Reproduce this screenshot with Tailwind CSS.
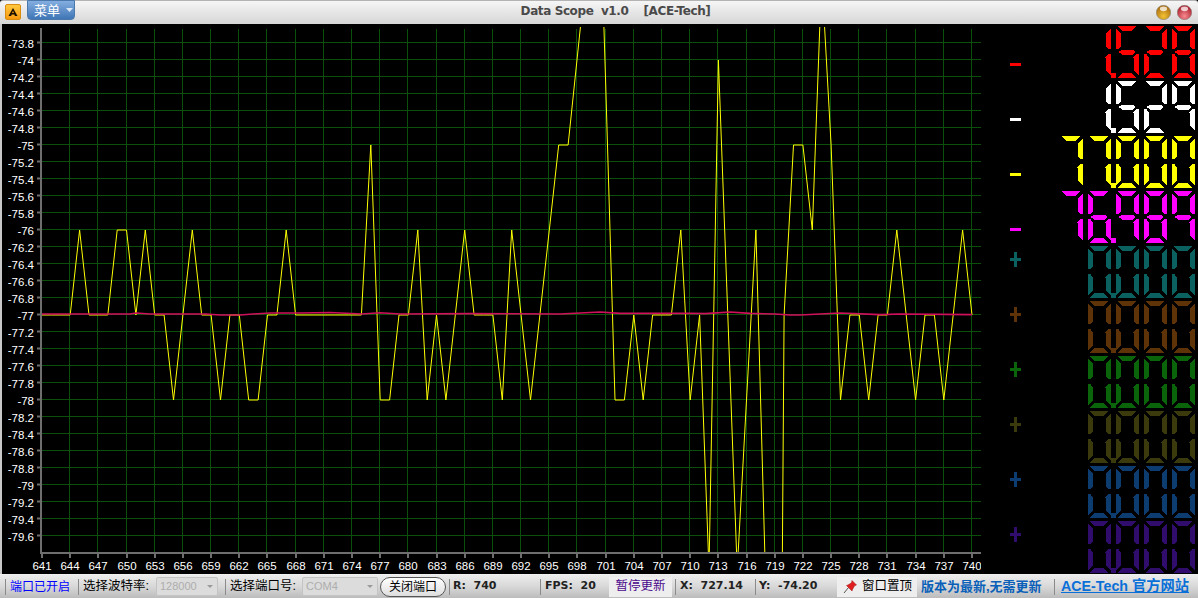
<!DOCTYPE html>
<html lang="zh">
<head>
<meta charset="utf-8">
<title>Data Scope</title>
<script src="https://cdn.jsdelivr.net/npm/@tailwindcss/browser@4"></script>
</head>
<body class="bg-black">
<div class="w-[1198px] h-[598px] overflow-hidden flex flex-col [font-family:'Liberation_Sans','Noto_Sans_CJK_SC',sans-serif]">

  <header class="h-[24px] shrink-0 flex items-start border-t border-[#b4b4b4] bg-gradient-to-b from-[#f6f6f6] to-[#d6d6d6] rounded-t-[3px]">
    <div class="ml-[5px] mt-[3px] w-[16px] h-[16px] rounded-[2px] border border-[#d98c10] bg-gradient-to-b from-[#ffc83c] to-[#f59a0c] flex items-center justify-center">
      <svg width="10" height="9" viewBox="0 0 10 9"><path d="M5 0 L9.5 8 L7 8 L6.2 6.4 L3.8 6.4 L3 8 L0.5 8 Z" fill="#1c1200"/><rect x="4.2" y="3.6" width="1.6" height="1.4" fill="#e89a10"/></svg>
    </div>
    <div class="ml-[6px] -mt-[1px] w-[48px] h-[20px] rounded-b-[4px] border border-[#4a78ad] bg-gradient-to-b from-[#84aee0] to-[#3f76b6] flex items-center pl-[6px] gap-[6px] text-white text-[13px] leading-none">
      <span>菜单</span>
      <svg width="7" height="4" viewBox="0 0 7 4"><path d="M0 0H7L3.5 4Z" fill="#dce8f6"/></svg>
    </div>
    <div class="flex-1 text-center text-[12px] leading-[21px] font-bold text-[#4a4a4a] whitespace-pre [font-family:'DejaVu_Sans',sans-serif] tracking-[-0.4px]">Data Scope  v1.0    [ACE-Tech]</div>
    <div class="flex gap-[6px] mt-[4px] mr-[6px]">
      <svg width="15" height="15" viewBox="0 0 15 15"><defs><radialGradient id="o1" cx="50%" cy="75%" r="70%"><stop offset="0" stop-color="#f4c232"/><stop offset="1" stop-color="#a86a10"/></radialGradient><radialGradient id="o2" cx="50%" cy="75%" r="70%"><stop offset="0" stop-color="#f88a90"/><stop offset="1" stop-color="#a81c28"/></radialGradient></defs><circle cx="7.5" cy="7.5" r="7.2" fill="url(#o1)" stroke="#8a8a7a" stroke-width=".6"/><ellipse cx="7.5" cy="3.8" rx="3.6" ry="2.4" fill="#fff" opacity=".75"/></svg>
      <svg width="15" height="15" viewBox="0 0 15 15"><circle cx="7.5" cy="7.5" r="7.2" fill="url(#o2)" stroke="#8a7a7a" stroke-width=".6"/><ellipse cx="7.5" cy="3.8" rx="3.6" ry="2.4" fill="#fff" opacity=".75"/></svg>
    </div>
  </header>

  <main class="h-[550px] shrink-0 flex bg-black">
    <div class="w-[2px] shrink-0 bg-[#c8c8c8]"></div>
    <svg class="w-[979px] h-[550px] shrink-0" viewBox="2 24 979 550">
      <defs><clipPath id="plot"><rect x="42" y="27" width="939" height="526"/></clipPath></defs>
      <path fill="none" stroke="#0a4f0a" stroke-width="1" d="M69.5 29V553M97.5 29V553M126.5 29V553M154.5 29V553M182.5 29V553M210.5 29V553M238.5 29V553M266.5 29V553M295.5 29V553M323.5 29V553M351.5 29V553M379.5 29V553M407.5 29V553M436.5 29V553M464.5 29V553M492.5 29V553M520.5 29V553M548.5 29V553M576.5 29V553M605.5 29V553M633.5 29V553M661.5 29V553M689.5 29V553M717.5 29V553M746.5 29V553M774.5 29V553M802.5 29V553M830.5 29V553M858.5 29V553M886.5 29V553M915.5 29V553M943.5 29V553M971.5 29V553"/>
      <path fill="none" stroke="#0a4f0a" stroke-width="1" d="M42 42.5H981M42 59.5H981M42 76.5H981M42 93.5H981M42 110.5H981M42 127.5H981M42 144.5H981M42 161.5H981M42 178.5H981M42 195.5H981M42 212.5H981M42 229.5H981M42 246.5H981M42 263.5H981M42 280.5H981M42 297.5H981M42 314.5H981M42 331.5H981M42 348.5H981M42 365.5H981M42 382.5H981M42 399.5H981M42 416.5H981M42 433.5H981M42 450.5H981M42 467.5H981M42 484.5H981M42 501.5H981M42 518.5H981M42 535.5H981"/>
      <g clip-path="url(#plot)" fill="none">
        <polyline stroke="#ffff00" stroke-width="1" points="42,315 51.4,315 60.8,315 70.2,315 79.6,230 89,315 98.4,315 107.8,315 117.2,230 126.5,230 135.9,315 145.3,230 154.7,315 164.1,315 173.5,400 182.9,315 192.3,230 201.7,315 211.1,315 220.5,400 229.9,315 239.3,315 248.7,400 258.1,400 267.5,315 276.9,315 286.2,230 295.6,315 361.4,315 370.8,145 380.2,400 389.6,400 399,315 408.4,315 417.8,230 427.2,400 436.5,315 445.9,400 455.3,315 464.7,230 474.1,315 483.5,315 492.9,315 502.3,400 511.7,230 521.1,315 530.5,400 539.9,315 549.3,230 558.7,145 568.1,145 577.5,55 586.9,-35 596.2,-220 605.6,81 615,400 624.4,400 633.8,315 643.2,400 652.6,315 662,315 671.4,315 680.8,230 690.2,400 699.6,315 709,570 718.4,60 727.8,315 737.2,570 746.5,400 755.9,230 765.3,570 774.7,1618 784.1,315 793.5,145 802.9,145 812.3,230 821.7,-25 831.1,145 840.5,400 849.9,315 859.3,315 868.7,400 878.1,315 887.4,315 896.8,230 906.2,315 915.6,400 925,315 934.4,315 943.8,400 953.2,315 962.6,230 972,315"/>
        <polyline stroke="#d0105c" stroke-width="1.6" points="42,314 130,314 136,313 150,314 206,314 220,315 240,315 253,314 270,313 300,313 330,312.5 362,314 380,312.8 400,314 470,313.6 560,314 600,312 620,313.4 690,313.2 705,313.6 730,312 750,313.4 775,314 790,315 800,315 820,314 840,313 880,314.6 900,314 972,314.6"/>
      </g>
      <path fill="none" stroke="#6e6e6e" stroke-width="2" d="M41 28V554M40 553H981"/>
      <path fill="none" stroke="#6e6e6e" stroke-width="2" d="M37 42.5H41M37 59.5H41M37 76.5H41M37 93.5H41M37 110.5H41M37 127.5H41M37 144.5H41M37 161.5H41M37 178.5H41M37 195.5H41M37 212.5H41M37 229.5H41M37 246.5H41M37 263.5H41M37 280.5H41M37 297.5H41M37 314.5H41M37 331.5H41M37 348.5H41M37 365.5H41M37 382.5H41M37 399.5H41M37 416.5H41M37 433.5H41M37 450.5H41M37 467.5H41M37 484.5H41M37 501.5H41M37 518.5H41M37 535.5H41"/>
      <path fill="none" stroke="#6e6e6e" stroke-width="2" d="M42 554V558M70 554V558M98 554V558M127 554V558M155 554V558M183 554V558M211 554V558M239 554V558M267 554V558M296 554V558M324 554V558M352 554V558M380 554V558M408 554V558M437 554V558M465 554V558M493 554V558M521 554V558M549 554V558M577 554V558M606 554V558M634 554V558M662 554V558M690 554V558M718 554V558M747 554V558M775 554V558M803 554V558M831 554V558M859 554V558M887 554V558M916 554V558M944 554V558M972 554V558"/>
      <g class="fill-white text-[11.5px]" text-anchor="end">
        <text x="34" y="48">-73.8</text><text x="34" y="65">-74</text><text x="34" y="82">-74.2</text><text x="34" y="99">-74.4</text><text x="34" y="116">-74.6</text><text x="34" y="133">-74.8</text><text x="34" y="150">-75</text><text x="34" y="167">-75.2</text><text x="34" y="184">-75.4</text><text x="34" y="201">-75.6</text><text x="34" y="218">-75.8</text><text x="34" y="235">-76</text><text x="34" y="252">-76.2</text><text x="34" y="269">-76.4</text><text x="34" y="286">-76.6</text><text x="34" y="303">-76.8</text><text x="34" y="320">-77</text><text x="34" y="337">-77.2</text><text x="34" y="354">-77.4</text><text x="34" y="371">-77.6</text><text x="34" y="388">-77.8</text><text x="34" y="405">-78</text><text x="34" y="422">-78.2</text><text x="34" y="439">-78.4</text><text x="34" y="456">-78.6</text><text x="34" y="473">-78.8</text><text x="34" y="490">-79</text><text x="34" y="507">-79.2</text><text x="34" y="524">-79.4</text><text x="34" y="541">-79.6</text>
      </g>
      <g class="fill-white text-[11.5px]" text-anchor="middle">
        <text x="42" y="570">641</text><text x="70" y="570">644</text><text x="98" y="570">647</text><text x="127" y="570">650</text><text x="155" y="570">653</text><text x="183" y="570">656</text><text x="211" y="570">659</text><text x="239" y="570">662</text><text x="267" y="570">665</text><text x="296" y="570">668</text><text x="324" y="570">671</text><text x="352" y="570">674</text><text x="380" y="570">677</text><text x="408" y="570">680</text><text x="437" y="570">683</text><text x="465" y="570">686</text><text x="493" y="570">689</text><text x="521" y="570">692</text><text x="549" y="570">695</text><text x="577" y="570">698</text><text x="606" y="570">701</text><text x="634" y="570">704</text><text x="662" y="570">707</text><text x="690" y="570">710</text><text x="718" y="570">713</text><text x="747" y="570">716</text><text x="775" y="570">719</text><text x="803" y="570">722</text><text x="831" y="570">725</text><text x="859" y="570">728</text><text x="887" y="570">731</text><text x="916" y="570">734</text><text x="944" y="570">737</text><text x="972" y="570">740</text>
      </g>
    </svg>

    <aside class="w-[217px] shrink-0 pt-[2px] overflow-hidden">
      <svg class="absolute w-0 h-0">
        <defs>
          <polygon id="sA" points="2,0 20.5,0 16,5 6.5,5"/>
          <polygon id="sF" points="0,2.5 5,7.5 5,20.5 2.5,23 0,23"/>
          <polygon id="sB" points="22.5,2.5 17.5,7.5 17.5,20.5 20,23 22.5,23"/>
          <polygon id="sG" points="2.5,26 7,23.5 16,23.5 20,26 16,29 7,29"/>
          <polygon id="sE" points="0,28 2.5,28.5 5,31.5 5,44 0,49"/>
          <polygon id="sC" points="22.5,28 20,28.5 17.5,31.5 17.5,44 22.5,49"/>
          <polygon id="sD" points="6.5,47 16,47 20.5,52 2,52"/>
          <g id="d0"><use href="#sA"/><use href="#sB"/><use href="#sC"/><use href="#sD"/><use href="#sE"/><use href="#sF"/></g>
          <g id="d1"><use href="#sB"/><use href="#sC"/></g>
          <g id="d2"><use href="#sA"/><use href="#sB"/><use href="#sG"/><use href="#sE"/><use href="#sD"/></g>
          <g id="d5"><use href="#sA"/><use href="#sF"/><use href="#sG"/><use href="#sC"/><use href="#sD"/></g>
          <g id="d6"><use href="#sA"/><use href="#sF"/><use href="#sG"/><use href="#sE"/><use href="#sC"/><use href="#sD"/></g>
          <g id="d7"><use href="#sA"/><use href="#sB"/><use href="#sC"/></g>
          <g id="d8"><use href="#sA"/><use href="#sB"/><use href="#sC"/><use href="#sD"/><use href="#sE"/><use href="#sF"/><use href="#sG"/></g>
          <g id="d9"><use href="#sA"/><use href="#sB"/><use href="#sC"/><use href="#sF"/><use href="#sG"/></g>
          <g id="z"><use href="#d0" x="28"/><rect x="51" y="47" width="5" height="5"/><use href="#d0" x="56"/><use href="#d0" x="84"/><use href="#d0" x="112"/></g>
        </defs>
      </svg>

      <div class="h-[55px] flex">
        <div class="ml-[29px] mt-[37px] w-[11px] h-[3px] bg-[#ff0000]"></div>
        <svg class="ml-[39px] w-[138px] h-[52px]" shape-rendering="crispEdges" fill="#ff0000"><use href="#d1" x="28"/><rect x="51" y="47" width="5" height="5"/><use href="#d5" x="56"/><use href="#d2" x="84"/><use href="#d8" x="112"/></svg>
      </div>
      <div class="h-[55px] flex">
        <div class="ml-[29px] mt-[37px] w-[11px] h-[3px] bg-white"></div>
        <svg class="ml-[39px] w-[138px] h-[52px]" shape-rendering="crispEdges" fill="#ffffff"><use href="#d1" x="28"/><rect x="51" y="47" width="5" height="5"/><use href="#d5" x="56"/><use href="#d2" x="84"/><use href="#d9" x="112"/></svg>
      </div>
      <div class="h-[55px] flex">
        <div class="ml-[29px] mt-[37px] w-[11px] h-[3px] bg-[#ffff00]"></div>
        <svg class="ml-[39px] w-[138px] h-[52px]" shape-rendering="crispEdges" fill="#ffff00"><use href="#d7" x="0"/><use href="#d7" x="28"/><rect x="51" y="47" width="5" height="5"/><use href="#d0" x="56"/><use href="#d0" x="84"/><use href="#d0" x="112"/></svg>
      </div>
      <div class="h-[55px] flex">
        <div class="ml-[29px] mt-[37px] w-[11px] h-[3px] bg-[#ff00ff]"></div>
        <svg class="ml-[39px] w-[138px] h-[52px]" shape-rendering="crispEdges" fill="#ff00ff"><use href="#d7" x="0"/><use href="#d6" x="28"/><rect x="51" y="47" width="5" height="5"/><use href="#d9" x="56"/><use href="#d8" x="84"/><use href="#d9" x="112"/></svg>
      </div>
      <div class="h-[55px] flex">
        <svg class="ml-[29px] mt-[6px] w-[11px] h-[15px]" fill="#0b6060"><rect y="6" width="11" height="3"/><rect x="4" width="3" height="15"/></svg>
        <svg class="ml-[39px] w-[138px] h-[52px]" shape-rendering="crispEdges" fill="#0b6060"><use href="#z"/></svg>
      </div>
      <div class="h-[55px] flex">
        <svg class="ml-[29px] mt-[6px] w-[11px] h-[15px]" fill="#5f3308"><rect y="6" width="11" height="3"/><rect x="4" width="3" height="15"/></svg>
        <svg class="ml-[39px] w-[138px] h-[52px]" shape-rendering="crispEdges" fill="#5f3308"><use href="#z"/></svg>
      </div>
      <div class="h-[55px] flex">
        <svg class="ml-[29px] mt-[6px] w-[11px] h-[15px]" fill="#0a640a"><rect y="6" width="11" height="3"/><rect x="4" width="3" height="15"/></svg>
        <svg class="ml-[39px] w-[138px] h-[52px]" shape-rendering="crispEdges" fill="#0a640a"><use href="#z"/></svg>
      </div>
      <div class="h-[55px] flex">
        <svg class="ml-[29px] mt-[6px] w-[11px] h-[15px]" fill="#3a3a0c"><rect y="6" width="11" height="3"/><rect x="4" width="3" height="15"/></svg>
        <svg class="ml-[39px] w-[138px] h-[52px]" shape-rendering="crispEdges" fill="#3a3a0c"><use href="#z"/></svg>
      </div>
      <div class="h-[55px] flex">
        <svg class="ml-[29px] mt-[6px] w-[11px] h-[15px]" fill="#0c3c70"><rect y="6" width="11" height="3"/><rect x="4" width="3" height="15"/></svg>
        <svg class="ml-[39px] w-[138px] h-[52px]" shape-rendering="crispEdges" fill="#0c3c70"><use href="#z"/></svg>
      </div>
      <div class="h-[52px] flex">
        <svg class="ml-[29px] mt-[6px] w-[11px] h-[15px]" fill="#300c6c"><rect y="6" width="11" height="3"/><rect x="4" width="3" height="15"/></svg>
        <svg class="ml-[39px] w-[138px] h-[52px]" shape-rendering="crispEdges" fill="#300c6c"><use href="#z"/></svg>
      </div>
    </aside>
  </main>

  <footer class="h-[24px] shrink-0 flex items-center border-t border-[#f0f0f0] bg-gradient-to-b from-[#ececec] via-[#d8d8d8] to-[#bcbcbc] text-[12px] text-black whitespace-nowrap">
    <div class="ml-[5px] w-px h-[16px] bg-[#8a8a8a]"></div>
    <span class="ml-[4px] w-[68px] text-[#0000ff]">端口已开启</span>
    <div class="w-px h-[16px] bg-[#8a8a8a]"></div>
    <span class="ml-[4px] w-[73px] text-[12.5px]">选择波特率:</span>
    <div class="w-[62px] h-[19px] rounded-[2px] border border-[#c4c4c4] bg-[#dcdcdc] text-[#adadad] text-[11px] flex items-center pl-[3px] justify-between pr-[4px]"><span>128000</span><svg width="6" height="3" viewBox="0 0 6 3"><path d="M0 0H6L3 3Z" fill="#9a9a9a"/></svg></div>
    <div class="ml-[7px] w-px h-[16px] bg-[#8a8a8a]"></div>
    <span class="ml-[4px] w-[72px] text-[12.5px]">选择端口号:</span>
    <div class="w-[76px] h-[19px] rounded-[2px] border border-[#c4c4c4] bg-[#dcdcdc] text-[#adadad] text-[11px] flex items-center pl-[3px] justify-between pr-[4px]"><span>COM4</span><svg width="6" height="3" viewBox="0 0 6 3"><path d="M0 0H6L3 3Z" fill="#9a9a9a"/></svg></div>
    <div class="ml-[2px] w-[66px] h-[20px] rounded-full border border-[#555] bg-gradient-to-b from-white to-[#dedede] flex items-center justify-center">关闭端口</div>
    <div class="ml-[3px] w-px h-[16px] bg-[#8a8a8a]"></div>
    <span class="ml-[3px] w-[87px] font-bold text-[#222] [font-family:'DejaVu_Sans',sans-serif] text-[11px] whitespace-pre">R:  740</span>
    <div class="w-px h-[16px] bg-[#8a8a8a]"></div>
    <span class="ml-[4px] w-[64px] font-bold text-[#222] [font-family:'DejaVu_Sans',sans-serif] text-[11px] whitespace-pre">FPS:  20</span>
    <div class="w-[63px] h-[20px] bg-[#eeeeee] text-[#4b0a8c] text-[12.5px] flex items-center justify-center">暂停更新</div>
    <div class="ml-[3px] w-px h-[16px] bg-[#8a8a8a]"></div>
    <span class="ml-[4px] w-[75px] font-bold text-[#222] [font-family:'DejaVu_Sans',sans-serif] text-[11px] whitespace-pre">X:  727.14</span>
    <div class="w-px h-[16px] bg-[#8a8a8a]"></div>
    <span class="ml-[3px] w-[78px] font-bold text-[#222] [font-family:'DejaVu_Sans',sans-serif] text-[11px] whitespace-pre">Y:  -74.20</span>
    <div class="w-[80px] h-[20px] bg-[#eeeeee] flex items-center pl-[6px] gap-[4px] text-[12.5px]">
      <svg width="15" height="15" viewBox="0 0 15 15"><path d="M1 14L5.5 8.5" stroke="#555" stroke-width="1"/><path d="M9 1.5L13.5 6L11.5 6.8L9.5 10.5L9 12L3.5 6.5L5 6L8.5 3.8Z" fill="#e02020" stroke="#a01010" stroke-width=".5"/></svg>
      <span>窗口置顶</span>
    </div>
    <span class="ml-[4px] w-[133px] font-bold text-[#0a60b8] text-[13px]">版本为最新,无需更新</span>
    <div class="w-px h-[16px] bg-[#8a8a8a]"></div>
    <a class="ml-[6px] font-bold text-[#0a70d8] underline text-[14.25px]">ACE-Tech 官方网站</a>
  </footer>
</div>
</body>
</html>
